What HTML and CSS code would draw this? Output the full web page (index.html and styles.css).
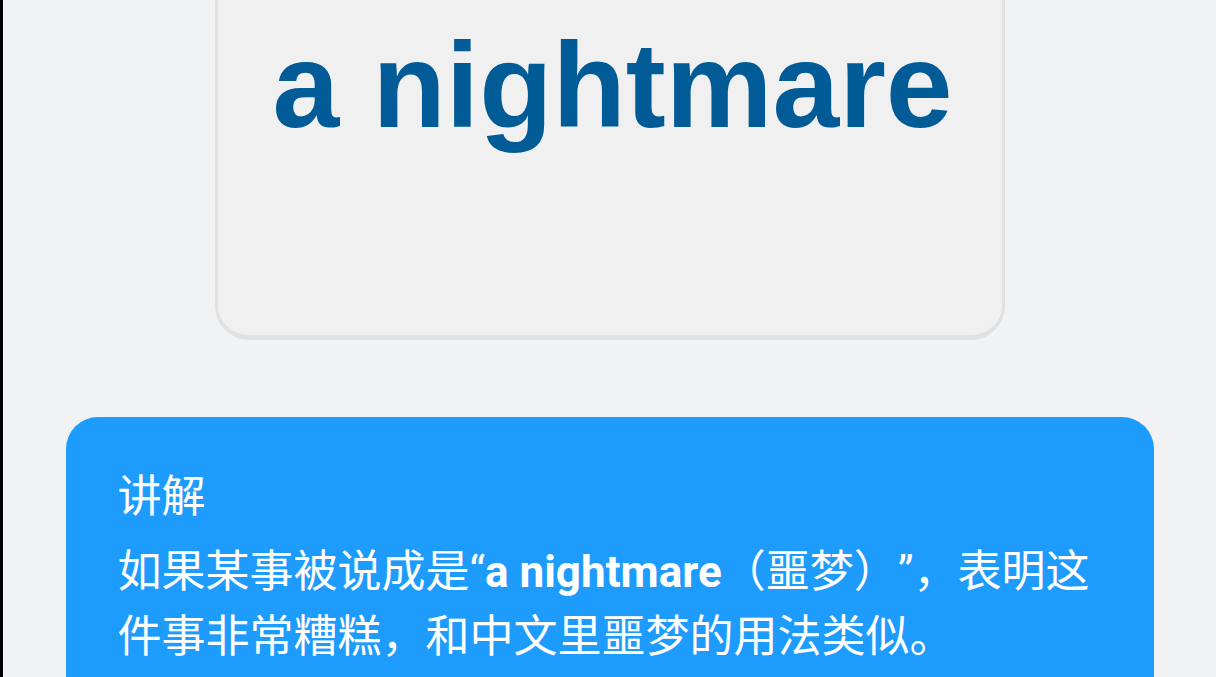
FILE: index.html
```html
<!DOCTYPE html>
<html lang="zh-CN">
<head>
<meta charset="utf-8">
<title>a nightmare</title>
<link rel="stylesheet" href="styles.css">
</head>
<body>
<main class="page">
  <section class="card">
    <h1 class="word">a nightmare</h1>
  </section>
  <section class="explain">
    <h2 class="explain-title">讲解</h2>
    <p class="explain-text">如果某事被说成是“<b class="en">a nightmare</b>（噩梦）”，表明这件事非常糟糕，和中文里噩梦的用法类似。</p>
  </section>
</main>
</body>
</html>
```
FILE: styles.css
```css
html, body {
  margin: 0;
  padding: 0;
}
body {
  background: #f1f2f4;
  border-left: 3px solid #000;
  height: 677px;
  overflow: hidden;
  box-sizing: border-box;
}
.page {
  display: flex;
  flex-direction: column;
  align-items: center;
}
.card {
  width: 790px;
  box-sizing: border-box;
  margin-top: -80px;
  padding: 102px 0 190px 6px;
  background: #f0f0f0;
  border: 3px solid #e1e1e1;
  border-bottom-width: 5px;
  border-radius: 34px;
  text-align: center;
}
.word {
  margin: 0;
  font-family: "Liberation Sans", Arial, sans-serif;
  font-weight: 700;
  font-size: 120px;
  line-height: 1;
  color: #005b97;
}
.explain {
  width: 1088px;
  box-sizing: border-box;
  margin-top: 77px;
  padding: 47px 40px 60px 52px;
  background: #1e9cfd;
  border-radius: 32px;
  color: #fff;
  font-family: Roboto, "Noto Sans CJK SC", sans-serif;
  text-spacing-trim: space-all;
}
.explain-title {
  margin: 0 0 10px;
  font-size: 44px;
  font-weight: 400;
  line-height: 66px;
}
.explain-text {
  margin: 0;
  font-size: 44px;
  line-height: 65px;
}
.en {
  font-weight: 700;
}
```
